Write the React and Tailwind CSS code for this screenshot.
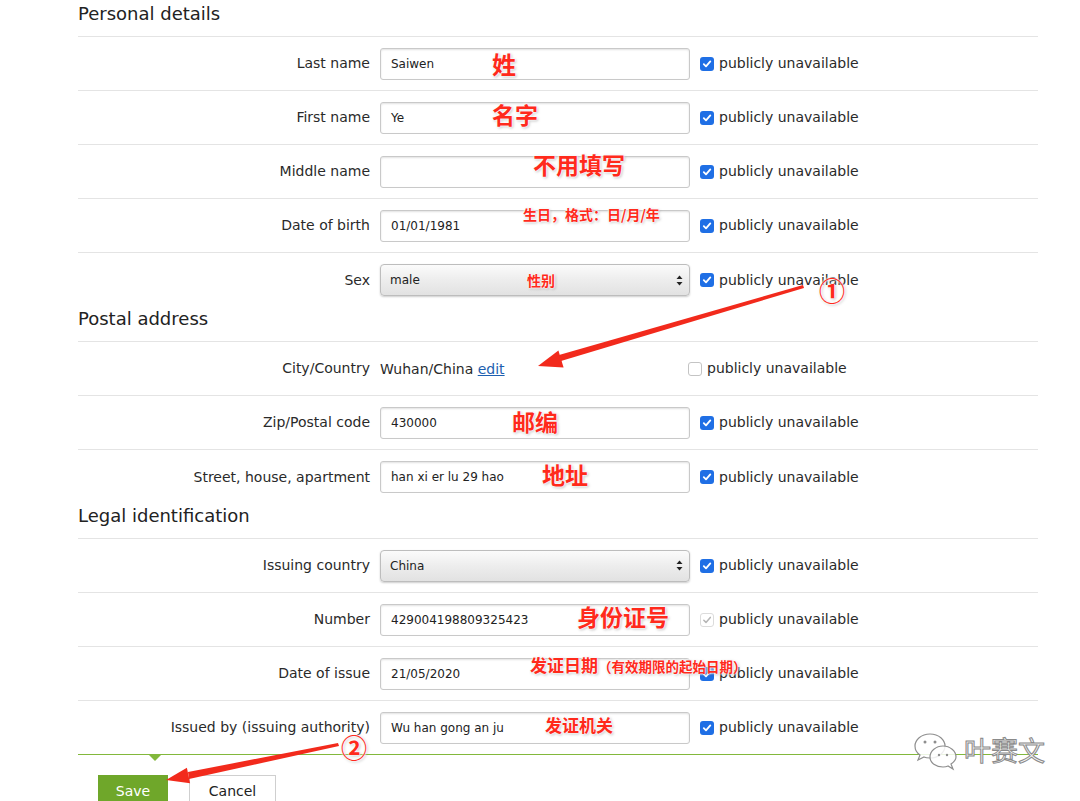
import React from "react";

const FONT = { fontFamily: '"DejaVu Sans", Verdana, sans-serif' };
const CJK = { fontFamily: '"Noto Sans CJK SC", sans-serif' };

function Check({ state = "on", className = "" }) {
  if (state === "on")
    return (
      <span className={`inline-flex items-center justify-center w-[14px] h-[14px] rounded-[3px] bg-[#1f6fe5] shrink-0 ${className}`}>
        <svg width="10" height="10" viewBox="0 0 10 10">
          <path d="M1.8 5.2 L4 7.4 L8.3 2.4" fill="none" stroke="#fff" strokeWidth="1.8" strokeLinecap="round" strokeLinejoin="round" />
        </svg>
      </span>
    );
  if (state === "disabled")
    return (
      <span className={`inline-flex items-center justify-center w-[14px] h-[14px] rounded-[3px] border border-[#dcdcdc] bg-white shrink-0 ${className}`}>
        <svg width="10" height="10" viewBox="0 0 10 10">
          <path d="M1.8 5.2 L4 7.4 L8.3 2.4" fill="none" stroke="#b5b5b5" strokeWidth="1.5" strokeLinecap="round" strokeLinejoin="round" />
        </svg>
      </span>
    );
  return <span className={`inline-block w-[14px] h-[14px] rounded-[3px] border border-[#c4c4c4] bg-white shrink-0 ${className}`} />;
}

function Input({ value }) {
  return (
    <div className="h-[32px] w-full border border-[#c9c9c9] rounded-[3px] bg-white shadow-[inset_0_1px_2px_rgba(0,0,0,0.12)] flex items-center pl-[10px] text-[12px] text-[#222]">
      {value}
    </div>
  );
}

function Select({ value }) {
  return (
    <div className="h-[32px] w-full border border-[#bdbdbd] rounded-[4px] bg-gradient-to-b from-[#fbfbfb] via-[#ededed] to-[#e2e2e2] shadow-[0_1px_2px_rgba(0,0,0,0.2)] flex items-center pl-[9px] pr-[6px] text-[12px] text-[#222]">
      <span className="flex-1">{value}</span>
      <svg width="7" height="11" viewBox="0 0 7 11">
        <path d="M3.5 0.5 L6.5 4 L0.5 4 Z" fill="#222" />
        <path d="M3.5 10.5 L6.5 7 L0.5 7 Z" fill="#222" />
      </svg>
    </div>
  );
}

function Row({ label, children, check = "on", last, green, narrow }) {
  const border = green
    ? "border-b border-[#82b83b]"
    : last
    ? ""
    : "border-b border-[#e4e4e4]";
  return (
    <div className={`flex items-center h-[54px] ${border}`}>
      <div className="w-[292px] shrink-0 text-right text-[14px] text-[#2a2a2a]">{label}</div>
      <div className={`ml-[10px] shrink-0 ${narrow ? "w-[298px]" : "w-[310px]"}`}>{children}</div>
      <Check state={check} className="ml-[10px]" />
      <span className="ml-[5px] text-[14px] text-[#2a2a2a]">publicly unavailable</span>
    </div>
  );
}

function Heading({ children, first }) {
  return (
    <div className={`border-b border-[#e4e4e4] ${first ? "pt-[2px] pb-[10px]" : "pt-0 pb-[10px]"}`}>
      <div className="text-[18px] leading-[24px] text-[#222]">{children}</div>
    </div>
  );
}

const ann = "absolute font-bold text-[#ff2a1c] leading-none whitespace-nowrap [text-shadow:0_0_2px_#fff,0_0_2px_#fff,0_0_3px_#fff,1px_1px_3px_rgba(0,0,0,0.35)]";

function Annotation({ left, top, size, children }) {
  return (
    <div className={ann} style={{ ...CJK, left, top, fontSize: size }}>
      {children}
    </div>
  );
}

export default function App() {
  return (
    <div className="relative w-[1080px] h-[801px] overflow-hidden bg-white" style={FONT}>
      <div className="ml-[78px] w-[960px]">
        <Heading first>Personal details</Heading>
        <Row label="Last name"><Input value="Saiwen" /></Row>
        <Row label="First name"><Input value="Ye" /></Row>
        <Row label="Middle name"><Input value="" /></Row>
        <Row label="Date of birth"><Input value="01/01/1981" /></Row>
        <Row label="Sex" last><Select value="male" /></Row>

        <Heading>Postal address</Heading>
        <Row label="City/Country" check="off" narrow>
          <span className="text-[14px] text-[#2a2a2a]">
            Wuhan/China <span className="text-[#1d5fb0] underline">edit</span>
          </span>
        </Row>
        <Row label="Zip/Postal code"><Input value="430000" /></Row>
        <Row label="Street, house, apartment" last><Input value="han xi er lu 29 hao" /></Row>

        <Heading>Legal identification</Heading>
        <Row label="Issuing country"><Select value="China" /></Row>
        <Row label="Number" check="disabled"><Input value="429004198809325423" /></Row>
        <Row label="Date of issue"><Input value="21/05/2020" /></Row>
        <Row label="Issued by (issuing authority)" green><Input value="Wu han gong an ju" /></Row>

        <div className="relative h-[20px]">
          <div className="absolute left-[71px] top-0 w-0 h-0 border-l-[6px] border-r-[6px] border-t-[6px] border-l-transparent border-r-transparent border-t-[#82b83b]" />
        </div>
        <div className="flex items-start ml-[20px] gap-[21px]">
          <button className="w-[70px] h-[32px] bg-[#6fa72a] text-white text-[14px] leading-[30px]" style={FONT}>Save</button>
          <button className="w-[87px] h-[32px] bg-white border border-[#cfcfcf] text-[#222] text-[14px] leading-[28px]" style={FONT}>Cancel</button>
        </div>
      </div>

      {/* annotations */}
      <Annotation left={492} top={52} size={24}>姓</Annotation>
      <Annotation left={492} top={103} size={23}>名字</Annotation>
      <Annotation left={533} top={153} size={23}>不用填写</Annotation>
      <Annotation left={523} top={207} size={14}>生日，格式：日/月/年</Annotation>
      <Annotation left={527} top={273} size={14}>性别</Annotation>
      <Annotation left={512} top={410} size={23}>邮编</Annotation>
      <Annotation left={542} top={463} size={23}>地址</Annotation>
      <Annotation left={577} top={605} size={23}>身份证号</Annotation>
      <Annotation left={530} top={656} size={17}>
        发证日期<span className="text-[13.5px]">（有效期限的起始日期）</span>
      </Annotation>
      <Annotation left={545} top={716} size={17}>发证机关</Annotation>
      <Annotation left={819} top={277} size={26}>①</Annotation>
      <Annotation left={341} top={734} size={26}>②</Annotation>

      <svg className="absolute left-0 top-0 pointer-events-none" width="1080" height="801">
        <polygon points="803,285 804,288 561,361 559,355" fill="#f22a1c" />
        <polygon points="538,366 558.4,350.4 563.6,367.6" fill="#f22a1c" />
        <polygon points="338,743 339,746 189,779 188,772" fill="#f22a1c" />
        <polygon points="166,780 186.9,767.7 190.1,783.3" fill="#f22a1c" />
        {/* wechat watermark */}
        <g fill="rgba(255,255,255,0.85)" stroke="#8e8e8e" strokeWidth="1.2">
          <path d="M930 734 C 921 734 915 740 915 746 C 915 750 917 753 920 755 L 918 760 L 924 757 C 926 758 928 758 930 758 C 939 758 945 752 945 746 C 945 740 939 734 930 734 Z" />
          <path d="M943 746 C 936 746 930 751 930 757 C 930 763 936 767 943 767 C 945 767 946 767 948 766 L 953 769 L 951 764 C 954 762 956 760 956 757 C 956 751 950 746 943 746 Z" />
        </g>
        <g fill="#8e8e8e">
          <circle cx="925" cy="742" r="1.5" />
          <circle cx="935" cy="742" r="1.5" />
          <circle cx="939" cy="755" r="1.2" />
          <circle cx="947" cy="755" r="1.2" />
        </g>
      </svg>
      <div className="absolute left-[964px] top-[736px] text-[27px] leading-none text-[#f2f2f2] [-webkit-text-stroke:1px_#8a8a8a]" style={CJK}>
        叶赛文
      </div>
    </div>
  );
}
